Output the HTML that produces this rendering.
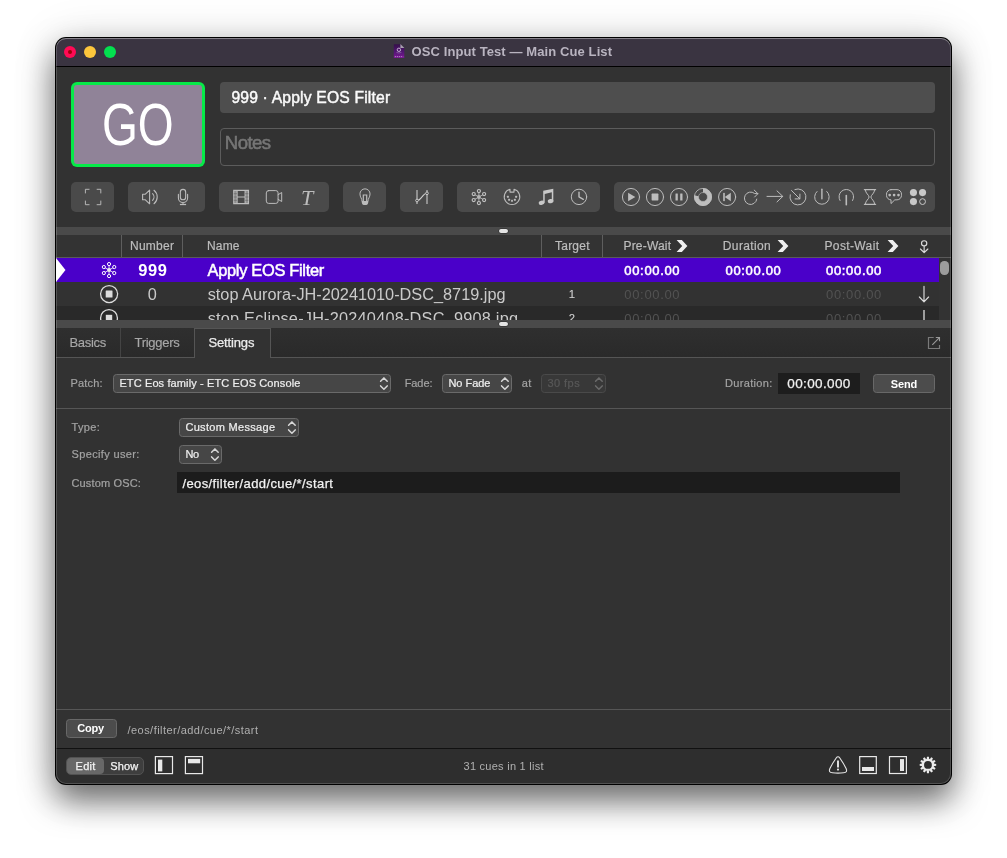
<!DOCTYPE html>
<html><head><meta charset="utf-8"><title>OSC Input Test — Main Cue List</title>
<style>
html,body{margin:0;padding:0;background:#fff;}
body{width:1007px;height:858px;position:relative;overflow:hidden;font-family:"Liberation Sans",sans-serif;}
#shadow{position:absolute;left:55px;top:37px;width:897px;height:748px;border-radius:11px;background:#000;
 box-shadow:0 16px 32px rgba(0,0,0,.55),0 2px 46px rgba(0,0,0,.13);}
#win{will-change:transform;position:absolute;left:0;top:0;width:1007px;height:858px;clip-path:inset(38px 56px 74px 56px round 10px);background:#323232;}
#hl{position:absolute;left:56px;top:38px;width:895px;height:746px;border-radius:10px;box-shadow:inset 0 0 0 1px rgba(255,255,255,.17), inset 0 1px 0 0 rgba(255,255,255,.26);pointer-events:none;}
svg{position:absolute;left:0;top:0;overflow:visible}
</style></head><body>
<div id="shadow"></div>
<div id="win">
<div style="position:absolute;left:56px;top:38px;width:895px;height:28px;background:#3a3441;border-radius:0px;"></div><div style="position:absolute;left:56px;top:66px;width:895px;height:1px;background:#000;border-radius:0px;"></div><div style="position:absolute;left:64px;top:46px;width:12px;height:12px;background:#ff0a55;border-radius:6px;"></div><div style="position:absolute;left:68px;top:50px;width:4px;height:4px;background:#9e0008;border-radius:2px;"></div><div style="position:absolute;left:84px;top:46px;width:12px;height:12px;background:#fdc63c;border-radius:6px;"></div><div style="position:absolute;left:104px;top:46px;width:12px;height:12px;background:#03e04f;border-radius:6px;"></div><span style='position:absolute;white-space:pre;font-family:"Liberation Sans",sans-serif;font-size:13px;font-weight:700;font-style:normal;line-height:13px;color:#b9b4c0;letter-spacing:0.098px;left:411.5px;top:45px;'>OSC Input Test — Main Cue List</span><div style="position:absolute;left:71px;top:82px;width:134px;height:85px;background:#06ea48;border-radius:6px;"></div><div style="position:absolute;left:74px;top:85px;width:128px;height:79px;background:#908398;border-radius:3px;"></div><span style='position:absolute;white-space:pre;font-family:"Liberation Sans",sans-serif;font-size:59.5px;font-weight:400;font-style:normal;line-height:59.5px;color:#fff;letter-spacing:0px;left:102.03px;top:94.8px;transform:scaleX(0.775);transform-origin:0 50%;'>GO</span><div style="position:absolute;left:220px;top:82px;width:715px;height:31px;background:#4e4e4e;border-radius:4px;"></div><span style='position:absolute;white-space:pre;font-family:"Liberation Sans",sans-serif;font-size:15.7px;font-weight:400;font-style:normal;line-height:15.7px;color:#fafafa;letter-spacing:0.171px;left:231.4px;top:89.8px;-webkit-text-stroke:0.45px #fafafa;'>999 · Apply EOS Filter</span><div style="position:absolute;left:220px;top:128px;width:715px;height:38px;background:transparent;border-radius:4px;box-sizing:border-box;border:1px solid #5c5c5c;"></div><span style='position:absolute;white-space:pre;font-family:"Liberation Sans",sans-serif;font-size:18.6px;font-weight:400;font-style:normal;line-height:18.6px;color:#767676;letter-spacing:-0.595px;left:224.8px;top:134.1px;-webkit-text-stroke:0.55px #767676;'>Notes</span><div style="position:absolute;left:71px;top:182px;width:43px;height:30px;background:#4a4a4a;border-radius:5px;"></div><div style="position:absolute;left:128px;top:182px;width:77px;height:30px;background:#4a4a4a;border-radius:5px;"></div><div style="position:absolute;left:219px;top:182px;width:110px;height:30px;background:#4a4a4a;border-radius:5px;"></div><div style="position:absolute;left:343px;top:182px;width:43px;height:30px;background:#4a4a4a;border-radius:5px;"></div><div style="position:absolute;left:400px;top:182px;width:43px;height:30px;background:#4a4a4a;border-radius:5px;"></div><div style="position:absolute;left:457px;top:182px;width:143px;height:30px;background:#4a4a4a;border-radius:5px;"></div><div style="position:absolute;left:614px;top:182px;width:321px;height:30px;background:#4a4a4a;border-radius:5px;"></div><div style="position:absolute;left:56px;top:227px;width:895px;height:8px;background:#4a4a4a;border-radius:0px;"></div><div style="position:absolute;left:499px;top:229px;width:9px;height:4px;background:#e4e4e4;border-radius:2px;box-shadow:0 0 0 .5px rgba(0,0,0,.45);"></div><div style="position:absolute;left:56px;top:235px;width:895px;height:23px;background:#333;border-radius:0px;"></div><div style="position:absolute;left:121px;top:235px;width:1px;height:22px;background:#5e5e5e;border-radius:0px;"></div><div style="position:absolute;left:182px;top:235px;width:1px;height:22px;background:#5e5e5e;border-radius:0px;"></div><div style="position:absolute;left:541px;top:235px;width:1px;height:22px;background:#5e5e5e;border-radius:0px;"></div><div style="position:absolute;left:602px;top:235px;width:1px;height:22px;background:#5e5e5e;border-radius:0px;"></div><div style="position:absolute;left:56px;top:257px;width:895px;height:1px;background:#5a5a5a;border-radius:0px;"></div><span style='position:absolute;white-space:pre;font-family:"Liberation Sans",sans-serif;font-size:12px;font-weight:400;font-style:normal;line-height:12px;color:#bdbdbd;letter-spacing:0.263px;left:130px;top:239.8px;-webkit-text-stroke:0.2px #bdbdbd;'>Number</span><span style='position:absolute;white-space:pre;font-family:"Liberation Sans",sans-serif;font-size:12px;font-weight:400;font-style:normal;line-height:12px;color:#bdbdbd;letter-spacing:0.161px;left:207px;top:239.8px;-webkit-text-stroke:0.2px #bdbdbd;'>Name</span><span style='position:absolute;white-space:pre;font-family:"Liberation Sans",sans-serif;font-size:12px;font-weight:400;font-style:normal;line-height:12px;color:#bdbdbd;letter-spacing:0.228px;left:555px;top:239.8px;-webkit-text-stroke:0.2px #bdbdbd;'>Target</span><span style='position:absolute;white-space:pre;font-family:"Liberation Sans",sans-serif;font-size:12px;font-weight:400;font-style:normal;line-height:12px;color:#bdbdbd;letter-spacing:0.181px;left:623.5px;top:239.8px;-webkit-text-stroke:0.2px #bdbdbd;'>Pre-Wait</span><span style='position:absolute;white-space:pre;font-family:"Liberation Sans",sans-serif;font-size:12px;font-weight:400;font-style:normal;line-height:12px;color:#bdbdbd;letter-spacing:0.377px;left:722.8px;top:239.8px;-webkit-text-stroke:0.2px #bdbdbd;'>Duration</span><span style='position:absolute;white-space:pre;font-family:"Liberation Sans",sans-serif;font-size:12px;font-weight:400;font-style:normal;line-height:12px;color:#bdbdbd;letter-spacing:0.367px;left:824.5px;top:239.8px;-webkit-text-stroke:0.2px #bdbdbd;'>Post-Wait</span><div style="position:absolute;left:56px;top:258px;width:883px;height:24px;background:#4a00c9;border-radius:0px;"></div><div style="position:absolute;left:56px;top:282px;width:883px;height:24px;background:#323232;border-radius:0px;"></div><div style="position:absolute;left:56px;top:306px;width:883px;height:14px;background:#292929;border-radius:0px;"></div><div style="position:absolute;left:939px;top:258px;width:12px;height:62px;background:#333;border-radius:0px;"></div><div style="position:absolute;left:940.4px;top:261px;width:8.3px;height:14px;background:#9c9c9c;border-radius:4.2px;"></div><svg width="1007" height="858"><polygon points="56,258 65.5,270 56,282" fill="#fff"/></svg><span style='position:absolute;white-space:pre;font-family:"Liberation Sans",sans-serif;font-size:16.5px;font-weight:700;font-style:normal;line-height:16.5px;color:#fff;letter-spacing:0.634px;left:138.2px;top:261.9px;'>999</span><span style='position:absolute;white-space:pre;font-family:"Liberation Sans",sans-serif;font-size:16.4px;font-weight:400;font-style:normal;line-height:16.4px;color:#fff;letter-spacing:-0.304px;left:207.6px;top:261.8px;-webkit-text-stroke:0.5px #fff;'>Apply EOS Filter</span><span style='position:absolute;white-space:pre;font-family:"Liberation Sans",sans-serif;font-size:13px;font-weight:400;font-style:normal;line-height:13px;color:#fff;letter-spacing:0.67px;left:624.3px;top:263.7px;-webkit-text-stroke:0.55px #fff;'>00:00.00</span><span style='position:absolute;white-space:pre;font-family:"Liberation Sans",sans-serif;font-size:13px;font-weight:400;font-style:normal;line-height:13px;color:#fff;letter-spacing:0.67px;left:725.5px;top:263.7px;-webkit-text-stroke:0.55px #fff;'>00:00.00</span><span style='position:absolute;white-space:pre;font-family:"Liberation Sans",sans-serif;font-size:13px;font-weight:400;font-style:normal;line-height:13px;color:#fff;letter-spacing:0.67px;left:826px;top:263.7px;-webkit-text-stroke:0.55px #fff;'>00:00.00</span><span style='position:absolute;white-space:pre;font-family:"Liberation Sans",sans-serif;font-size:16.3px;font-weight:400;font-style:normal;line-height:16.3px;color:#cacaca;letter-spacing:0px;left:147.87px;top:285.8px;'>0</span><span style='position:absolute;white-space:pre;font-family:"Liberation Sans",sans-serif;font-size:16.3px;font-weight:400;font-style:normal;line-height:16.3px;color:#cacaca;letter-spacing:0.001px;left:207.7px;top:285.7px;'>stop Aurora-JH-20241010-DSC_8719.jpg</span><span style='position:absolute;white-space:pre;font-family:"Liberation Sans",sans-serif;font-size:11.3px;font-weight:400;font-style:normal;line-height:11.3px;color:#d0d0d0;letter-spacing:0px;left:568.85px;top:288.7px;-webkit-text-stroke:0.1px #d0d0d0;'>1</span><span style='position:absolute;white-space:pre;font-family:"Liberation Sans",sans-serif;font-size:13px;font-weight:400;font-style:normal;line-height:13px;color:#525252;letter-spacing:0.67px;left:624.3px;top:287.7px;'>00:00.00</span><span style='position:absolute;white-space:pre;font-family:"Liberation Sans",sans-serif;font-size:13px;font-weight:400;font-style:normal;line-height:13px;color:#525252;letter-spacing:0.67px;left:826px;top:287.7px;'>00:00.00</span><div style="position:absolute;left:56px;top:306px;width:883px;height:14px;overflow:hidden"><div style="position:absolute;left:-56px;top:-306px;width:1007px;height:858px"><span style='position:absolute;white-space:pre;font-family:"Liberation Sans",sans-serif;font-size:16.3px;font-weight:400;font-style:normal;line-height:16.3px;color:#cacaca;letter-spacing:0.222px;left:207.7px;top:309.7px;'>stop Eclipse-JH-20240408-DSC_9908.jpg</span><span style='position:absolute;white-space:pre;font-family:"Liberation Sans",sans-serif;font-size:11.3px;font-weight:400;font-style:normal;line-height:11.3px;color:#d0d0d0;letter-spacing:0px;left:568.85px;top:312.7px;-webkit-text-stroke:0.1px #d0d0d0;'>2</span><span style='position:absolute;white-space:pre;font-family:"Liberation Sans",sans-serif;font-size:13px;font-weight:400;font-style:normal;line-height:13px;color:#525252;letter-spacing:0.67px;left:624.3px;top:311.7px;'>00:00.00</span><span style='position:absolute;white-space:pre;font-family:"Liberation Sans",sans-serif;font-size:13px;font-weight:400;font-style:normal;line-height:13px;color:#525252;letter-spacing:0.67px;left:826px;top:311.7px;'>00:00.00</span><svg width="1007" height="858"><g fill="none" stroke="#ddd" stroke-width="1.3"><circle cx="109" cy="318" r="8.4"/><path d="M924,310V326"/></g><rect x="105.8" y="314.8" width="6.4" height="6.4" fill="#ddd"/></svg></div></div><div style="position:absolute;left:56px;top:319.5px;width:895px;height:8.9px;background:#4a4a4a;border-radius:0px;"></div><div style="position:absolute;left:499px;top:322px;width:9px;height:4px;background:#e4e4e4;border-radius:2px;box-shadow:0 0 0 .5px rgba(0,0,0,.45);"></div><div style="position:absolute;left:56px;top:328px;width:895px;height:29px;background:#2c2c2c;border-radius:0px;background:linear-gradient(#2f2f2f,#2a2a2a);"></div><div style="position:absolute;left:56px;top:357px;width:895px;height:1px;background:#555;border-radius:0px;"></div><div style="position:absolute;left:120px;top:328px;width:1px;height:29px;background:#444;border-radius:0px;"></div><div style="position:absolute;left:194px;top:328px;width:76.5px;height:30px;background:#323232;border-radius:0px;box-sizing:border-box;border:1px solid #555;border-bottom:none;"></div><span style='position:absolute;white-space:pre;font-family:"Liberation Sans",sans-serif;font-size:13px;font-weight:400;font-style:normal;line-height:13px;color:#a8a8a8;letter-spacing:-0.299px;left:69.5px;top:336px;-webkit-text-stroke:0.15px #a8a8a8;'>Basics</span><span style='position:absolute;white-space:pre;font-family:"Liberation Sans",sans-serif;font-size:13px;font-weight:400;font-style:normal;line-height:13px;color:#a8a8a8;letter-spacing:-0.286px;left:134.5px;top:336px;-webkit-text-stroke:0.15px #a8a8a8;'>Triggers</span><span style='position:absolute;white-space:pre;font-family:"Liberation Sans",sans-serif;font-size:13px;font-weight:400;font-style:normal;line-height:13px;color:#ececec;letter-spacing:-0.141px;left:208.4px;top:336px;-webkit-text-stroke:0.25px #ececec;'>Settings</span><span style='position:absolute;white-space:pre;font-family:"Liberation Sans",sans-serif;font-size:11px;font-weight:400;font-style:normal;line-height:11px;color:#a3a3a3;letter-spacing:0.203px;left:70.4px;top:378px;-webkit-text-stroke:0.2px #a3a3a3;'>Patch:</span><div style="position:absolute;left:113px;top:374px;width:278px;height:19px;background:#464646;border-radius:3.5px;box-sizing:border-box;border:1px solid #6a6a6a;"></div><span style='position:absolute;white-space:pre;font-family:"Liberation Sans",sans-serif;font-size:11px;font-weight:400;font-style:normal;line-height:11px;color:#eee;letter-spacing:0.12px;left:119.4px;top:378.1px;-webkit-text-stroke:0.22px #eee;'>ETC Eos family - ETC EOS Console</span><svg width="1007" height="858"><path d="M380.59999999999997,381.3L383.9,377.9L387.2,381.3M380.59999999999997,385.9L383.9,389.3L387.2,385.9" fill="none" stroke="#d8d8d8" stroke-width="1.5" stroke-linecap="round" stroke-linejoin="round"/></svg><span style='position:absolute;white-space:pre;font-family:"Liberation Sans",sans-serif;font-size:11px;font-weight:400;font-style:normal;line-height:11px;color:#a3a3a3;letter-spacing:-0.085px;left:404.7px;top:378px;-webkit-text-stroke:0.2px #a3a3a3;'>Fade:</span><div style="position:absolute;left:442px;top:374px;width:70px;height:19px;background:#464646;border-radius:3.5px;box-sizing:border-box;border:1px solid #6a6a6a;"></div><span style='position:absolute;white-space:pre;font-family:"Liberation Sans",sans-serif;font-size:11px;font-weight:400;font-style:normal;line-height:11px;color:#eee;letter-spacing:-0.017px;left:448.4px;top:378.1px;-webkit-text-stroke:0.22px #eee;'>No Fade</span><svg width="1007" height="858"><path d="M501.59999999999997,381.3L504.9,377.9L508.2,381.3M501.59999999999997,385.9L504.9,389.3L508.2,385.9" fill="none" stroke="#d8d8d8" stroke-width="1.5" stroke-linecap="round" stroke-linejoin="round"/></svg><span style='position:absolute;white-space:pre;font-family:"Liberation Sans",sans-serif;font-size:11px;font-weight:400;font-style:normal;line-height:11px;color:#a3a3a3;letter-spacing:0.213px;left:521.8px;top:378px;-webkit-text-stroke:0.2px #a3a3a3;'>at</span><div style="position:absolute;left:541px;top:374px;width:65px;height:19px;background:#383838;border-radius:3.5px;box-sizing:border-box;border:1px solid #4a4a4a;"></div><span style='position:absolute;white-space:pre;font-family:"Liberation Sans",sans-serif;font-size:11px;font-weight:400;font-style:normal;line-height:11px;color:#585858;letter-spacing:0.466px;left:547.4px;top:378.1px;-webkit-text-stroke:0.22px #585858;'>30 fps</span><svg width="1007" height="858"><path d="M595.6,381.3L598.9,377.9L602.1999999999999,381.3M595.6,385.9L598.9,389.3L602.1999999999999,385.9" fill="none" stroke="#6a6a6a" stroke-width="1.5" stroke-linecap="round" stroke-linejoin="round"/></svg><span style='position:absolute;white-space:pre;font-family:"Liberation Sans",sans-serif;font-size:11px;font-weight:400;font-style:normal;line-height:11px;color:#a3a3a3;letter-spacing:0.332px;left:725px;top:378px;-webkit-text-stroke:0.2px #a3a3a3;'>Duration:</span><div style="position:absolute;left:778px;top:373px;width:82px;height:21px;background:#1d1d1d;border-radius:0px;"></div><span style='position:absolute;white-space:pre;font-family:"Liberation Sans",sans-serif;font-size:13.5px;font-weight:400;font-style:normal;line-height:13.5px;color:#f2f2f2;letter-spacing:0.367px;left:787.3px;top:377.4px;-webkit-text-stroke:0.25px #f2f2f2;'>00:00.000</span><div style="position:absolute;left:873px;top:374px;width:62px;height:19px;background:#4c4c4c;border-radius:3.5px;box-sizing:border-box;border:1px solid #686868;"></div><span style='position:absolute;white-space:pre;font-family:"Liberation Sans",sans-serif;font-size:11px;font-weight:700;font-style:normal;line-height:11px;color:#fff;letter-spacing:-0.169px;left:890.8px;top:378.6px;'>Send</span><div style="position:absolute;left:56px;top:408px;width:895px;height:1px;background:#565656;border-radius:0px;"></div><span style='position:absolute;white-space:pre;font-family:"Liberation Sans",sans-serif;font-size:11px;font-weight:400;font-style:normal;line-height:11px;color:#a3a3a3;letter-spacing:0.348px;left:71.5px;top:422.2px;-webkit-text-stroke:0.2px #a3a3a3;'>Type:</span><div style="position:absolute;left:179px;top:418px;width:120px;height:19px;background:#464646;border-radius:3.5px;box-sizing:border-box;border:1px solid #6a6a6a;"></div><span style='position:absolute;white-space:pre;font-family:"Liberation Sans",sans-serif;font-size:11px;font-weight:400;font-style:normal;line-height:11px;color:#eee;letter-spacing:0.316px;left:185.4px;top:422.1px;-webkit-text-stroke:0.22px #eee;'>Custom Message</span><svg width="1007" height="858"><path d="M288.59999999999997,425.3L291.9,421.9L295.2,425.3M288.59999999999997,429.9L291.9,433.3L295.2,429.9" fill="none" stroke="#d8d8d8" stroke-width="1.5" stroke-linecap="round" stroke-linejoin="round"/></svg><span style='position:absolute;white-space:pre;font-family:"Liberation Sans",sans-serif;font-size:11px;font-weight:400;font-style:normal;line-height:11px;color:#a3a3a3;letter-spacing:0.359px;left:71.5px;top:448.8px;-webkit-text-stroke:0.2px #a3a3a3;'>Specify user:</span><div style="position:absolute;left:179px;top:445px;width:43px;height:19px;background:#464646;border-radius:3.5px;box-sizing:border-box;border:1px solid #6a6a6a;"></div><span style='position:absolute;white-space:pre;font-family:"Liberation Sans",sans-serif;font-size:11px;font-weight:400;font-style:normal;line-height:11px;color:#eee;letter-spacing:-0.363px;left:185.4px;top:449.1px;-webkit-text-stroke:0.22px #eee;'>No</span><svg width="1007" height="858"><path d="M211.6,452.3L214.9,448.9L218.20000000000002,452.3M211.6,456.9L214.9,460.3L218.20000000000002,456.9" fill="none" stroke="#d8d8d8" stroke-width="1.5" stroke-linecap="round" stroke-linejoin="round"/></svg><span style='position:absolute;white-space:pre;font-family:"Liberation Sans",sans-serif;font-size:11px;font-weight:400;font-style:normal;line-height:11px;color:#a3a3a3;letter-spacing:0.154px;left:71.5px;top:478.2px;-webkit-text-stroke:0.2px #a3a3a3;'>Custom OSC:</span><div style="position:absolute;left:177px;top:472px;width:723px;height:21px;background:#1c1c1c;border-radius:0px;"></div><span style='position:absolute;white-space:pre;font-family:"Liberation Sans",sans-serif;font-size:13px;font-weight:400;font-style:normal;line-height:13px;color:#f2f2f2;letter-spacing:0.4px;left:182.4px;top:477.3px;-webkit-text-stroke:0.25px #f2f2f2;'>/eos/filter/add/cue/*/start</span><div style="position:absolute;left:56px;top:709px;width:895px;height:1px;background:#565656;border-radius:0px;"></div><div style="position:absolute;left:66px;top:719px;width:51px;height:19px;background:#4c4c4c;border-radius:3.5px;box-sizing:border-box;border:1px solid #686868;"></div><span style='position:absolute;white-space:pre;font-family:"Liberation Sans",sans-serif;font-size:11px;font-weight:700;font-style:normal;line-height:11px;color:#fff;letter-spacing:-0.233px;left:77.3px;top:723.3px;'>Copy</span><span style='position:absolute;white-space:pre;font-family:"Liberation Sans",sans-serif;font-size:11px;font-weight:400;font-style:normal;line-height:11px;color:#b0b0b0;letter-spacing:0.457px;left:127.5px;top:724.5px;'>/eos/filter/add/cue/*/start</span><div style="position:absolute;left:56px;top:748px;width:895px;height:1px;background:#111;border-radius:0px;"></div><div style="position:absolute;left:56px;top:749px;width:895px;height:35px;background:#2e2e2e;border-radius:0px;"></div><div style="position:absolute;left:66px;top:757px;width:78px;height:18px;background:#3e3e3e;border-radius:5px;box-sizing:border-box;border:1px solid #525252;"></div><div style="position:absolute;left:67px;top:758px;width:37px;height:16px;background:#686868;border-radius:4px;"></div><span style='position:absolute;white-space:pre;font-family:"Liberation Sans",sans-serif;font-size:11px;font-weight:400;font-style:normal;line-height:11px;color:#f4f4f4;letter-spacing:0.277px;left:75.6px;top:760.7px;-webkit-text-stroke:0.25px #f4f4f4;'>Edit</span><span style='position:absolute;white-space:pre;font-family:"Liberation Sans",sans-serif;font-size:11px;font-weight:400;font-style:normal;line-height:11px;color:#f4f4f4;letter-spacing:0.09px;left:110.3px;top:760.7px;-webkit-text-stroke:0.25px #f4f4f4;'>Show</span><span style='position:absolute;white-space:pre;font-family:"Liberation Sans",sans-serif;font-size:11px;font-weight:400;font-style:normal;line-height:11px;color:#b0b0b0;letter-spacing:0.261px;left:463.5px;top:761px;'>31 cues in 1 list</span><svg width="1007" height="858"><g transform="translate(93.1,197)" ><path d="M-7.7,-3.6V-7.7H-3.6M3.6,-7.7H7.7V-3.6M7.7,3.6V7.7H3.6M-3.6,7.7H-7.7V3.6" fill="none" stroke="#bcbcbc" stroke-width=".95"/></g><g transform="translate(150,197)" ><path d="M-7.4,-2.7H-4.9L-0.4,-6.8V6.8L-4.9,2.7H-7.4Z" fill="none" stroke="#bcbcbc" stroke-width="1.1" stroke-linecap="round" stroke-linejoin="round"/><path d="M2.6,-3.3A4.7,4.7 0 0 1 2.6,3.3M4,-6.7A8.6,8.6 0 0 1 4,6.7" fill="none" stroke="#bcbcbc" stroke-width="1.1" stroke-linecap="round" stroke-linejoin="round"/></g><g transform="translate(183,197)" ><rect x="-2.65" y="-7.6" width="5.3" height="10.4" rx="2.65" fill="none" stroke="#bcbcbc" stroke-width="1.1" stroke-linecap="round" stroke-linejoin="round"/><path d="M-4.6,-2.6V0.9A4.6,4.6 0 0 0 4.6,0.9V-2.6M0,5.5V7.5" fill="none" stroke="#bcbcbc" stroke-width="1.1" stroke-linecap="round" stroke-linejoin="round"/><path d="M-3.1,7.5H3.1" fill="none" stroke="#bcbcbc" stroke-width="1.25" stroke-linecap="butt" stroke-linejoin="round"/></g><g transform="translate(241.1,197)" ><rect x="-7.4" y="-6.7" width="3.4" height="13.4" fill="#bcbcbc" fill-opacity=".6"/><rect x="4" y="-6.7" width="3.4" height="13.4" fill="#bcbcbc" fill-opacity=".6"/><path d="M-7.4,-6.6H7.4V6.6H-7.4ZM-4,-6.6V6.6M4,-6.6V6.6M-4,0H4" fill="none" stroke="#bcbcbc" stroke-width="1.1" stroke-linecap="butt" stroke-linejoin="miter"/><path d="M-7.4,-3.3H-4M-7.4,0H-4M-7.4,3.3H-4M4,-3.3H7.4M4,0H7.4M4,3.3H7.4" fill="none" stroke="#4a4a4a" stroke-width=".6" stroke-opacity=".7"/></g><g transform="translate(274,197)" ><rect x="-7.7" y="-6.4" width="11.8" height="12.8" rx="2.3" fill="none" stroke="#bcbcbc" stroke-width="1" stroke-linecap="round" stroke-linejoin="round"/><path d="M4.1,-2.3L7.7,-4.5V4.5L4.1,2.3" fill="none" stroke="#bcbcbc" stroke-width="1" stroke-linecap="round" stroke-linejoin="round"/></g><g transform="translate(365,197)" ><path d="M-2.9,4.2C-2.9,1.4 -5.05,0.4 -5.05,-3.1A5.05,5.05 0 0 1 5.05,-3.1C5.05,0.4 2.9,1.4 2.9,4.2" fill="none" stroke="#bcbcbc" stroke-width="1" stroke-linecap="round" stroke-linejoin="round"/><path d="M-1.7,4V-2H1.7V4" fill="none" stroke="#bcbcbc" stroke-width="1.2"/><path d="M-3.2,4H3.2V5.2A3.2,2.9 0 0 1 -3.2,5.2Z" fill="#bcbcbc" stroke="none"/></g><g transform="translate(422,197)" ><path d="M-5,-6.9V6.9M5,-6.9V6.9" fill="none" stroke="#a2a2a2" stroke-width="1.6"/><path d="M-5,3.5C-2,3.5 -1.6,1.6 0,-0.1C1.6,-1.8 2,-3.7 5,-3.7" fill="none" stroke="#cfcfcf" stroke-width="1.1"/><circle cx="-5" cy="3.5" r="1.35" fill="#4a4a4a" stroke="#cfcfcf" stroke-width=".9"/><circle cx="5" cy="-3.7" r="1.35" fill="#4a4a4a" stroke="#cfcfcf" stroke-width=".9"/></g><g transform="translate(478.9,197)" ><path d="M0,0L0.00,-6.00" stroke="#c2c2c2" stroke-width="0.8" fill="none"/><path d="M0,0L-5.20,-3.00" stroke="#c2c2c2" stroke-width="0.8" fill="none"/><path d="M0,0L-5.20,3.00" stroke="#c2c2c2" stroke-width="0.8" fill="none"/><path d="M0,0L-0.00,6.00" stroke="#c2c2c2" stroke-width="0.8" fill="none"/><path d="M0,0L5.20,3.00" stroke="#c2c2c2" stroke-width="0.8" fill="none"/><path d="M0,0L5.20,-3.00" stroke="#c2c2c2" stroke-width="0.8" fill="none"/><circle cx="0.00" cy="-6.00" r="1.55" fill="#4a4a4a" stroke="#c2c2c2" stroke-width="1.15"/><circle cx="-5.20" cy="-3.00" r="1.55" fill="#4a4a4a" stroke="#c2c2c2" stroke-width="1.15"/><circle cx="-5.20" cy="3.00" r="1.55" fill="#4a4a4a" stroke="#c2c2c2" stroke-width="1.15"/><circle cx="-0.00" cy="6.00" r="1.55" fill="#4a4a4a" stroke="#c2c2c2" stroke-width="1.15"/><circle cx="5.20" cy="3.00" r="1.55" fill="#4a4a4a" stroke="#c2c2c2" stroke-width="1.15"/><circle cx="5.20" cy="-3.00" r="1.55" fill="#4a4a4a" stroke="#c2c2c2" stroke-width="1.15"/><circle cx="0" cy="0" r="1.9" fill="#b4b4b4"/></g><g transform="translate(512,196.8)" ><path d="M-2,-7.5A7.75,7.75 0 1 0 2,-7.5V-4.7H-2Z" fill="none" stroke="#bcbcbc" stroke-width="1.1" stroke-linecap="round" stroke-linejoin="round"/><rect x="-5.05" y="-1.05" width="1.9" height="1.9" rx=".5" fill="#bcbcbc" stroke="none"/><rect x="-3.8499999999999996" y="2.05" width="1.9" height="1.9" rx=".5" fill="#bcbcbc" stroke="none"/><rect x="-0.95" y="3.05" width="1.9" height="1.9" rx=".5" fill="#bcbcbc" stroke="none"/><rect x="1.95" y="2.05" width="1.9" height="1.9" rx=".5" fill="#bcbcbc" stroke="none"/><rect x="3.1499999999999995" y="-1.05" width="1.9" height="1.9" rx=".5" fill="#bcbcbc" stroke="none"/></g><g transform="translate(546,197)" ><path d="M-2.8,-6.2L7.3,-8.3V4.2H5.8V-4.7L-1.3,-3.1V5.8H-2.8Z" fill="#c8c8c8"/><ellipse cx="-4.45" cy="5.8" rx="2.85" ry="2.1" fill="#c8c8c8" transform="rotate(-14 -4.45 5.8)"/><ellipse cx="4.6" cy="4.1" rx="2.85" ry="2.1" fill="#c8c8c8" transform="rotate(-14 4.6 4.1)"/></g><g transform="translate(579,196.9)" ><circle r="7.7" fill="none" stroke="#bcbcbc" stroke-width="1" stroke-linecap="round" stroke-linejoin="round"/><path d="M0,-4.8V0L4.3,2.4" fill="none" stroke="#bcbcbc" stroke-width="1.4" stroke-linecap="round" stroke-linejoin="round"/></g><g transform="translate(631,197)" ><circle r="8.55" fill="none" stroke="#bcbcbc" stroke-width="1" stroke-linecap="round" stroke-linejoin="round"/><path d="M-2.9,-4.2L4.3,0L-2.9,4.2Z" fill="#bcbcbc" stroke="none"/></g><g transform="translate(655,197)" ><circle r="8.55" fill="none" stroke="#bcbcbc" stroke-width="1" stroke-linecap="round" stroke-linejoin="round"/><rect x="-3.4" y="-3.4" width="6.8" height="6.8" rx=".6" fill="#bcbcbc" stroke="none"/></g><g transform="translate(679,197)" ><circle r="8.55" fill="none" stroke="#bcbcbc" stroke-width="1" stroke-linecap="round" stroke-linejoin="round"/><rect x="-3.5" y="-3.6" width="2.3" height="7.2" rx=".4" fill="#bcbcbc" stroke="none"/><rect x="1.2" y="-3.6" width="2.3" height="7.2" rx=".4" fill="#bcbcbc" stroke="none"/></g><g transform="translate(703,197)" ><circle r="6.7" fill="none" stroke="#bebebe" stroke-width="4.4" stroke-dasharray="32.63 9.47" transform="rotate(-90)"/><circle r="8.6" fill="none" stroke="#bebebe" stroke-width=".8"/><circle r="4.5" fill="none" stroke="#bebebe" stroke-width=".6"/></g><g transform="translate(727.1,197)" ><circle r="8.55" fill="none" stroke="#bcbcbc" stroke-width="1" stroke-linecap="round" stroke-linejoin="round"/><rect x="-3.9" y="-4.1" width="1.6" height="8.2" fill="#bcbcbc" stroke="none"/><path d="M3.7,-4.2L-2.3,0L3.7,4.2Z" fill="#bcbcbc" stroke="none"/></g><g transform="translate(750,197.6)" id="redo"><path d="M7.9,-3.9L4.6,-4.1A6.2,6.2 0 1 0 6.8,1.5" fill="none" stroke="#bcbcbc" stroke-width="1" stroke-linecap="round" stroke-linejoin="round"/><path d="M4.2,-7.5L7.9,-3.9L4.6,-0.6" fill="none" stroke="#bcbcbc" stroke-width="1" stroke-linecap="round" stroke-linejoin="round"/></g><g transform="translate(775,196.4)" ><path d="M-8,0H7.7M2,-5.5L7.8,0L2,5.5" fill="none" stroke="#bcbcbc" stroke-width="1" stroke-linecap="round" stroke-linejoin="round"/></g><g transform="translate(797.9,196.9)" ><path d="M-3,-7.4A8,8 0 1 1 -7.7,-2.1" fill="none" stroke="#bcbcbc" stroke-width="1" stroke-linecap="round" stroke-linejoin="round"/><path d="M-6.4,-6.4L1.9,1.9M2,-2.8V2H-2.8" fill="none" stroke="#bcbcbc" stroke-width="1" stroke-linecap="round" stroke-linejoin="round"/></g><g transform="translate(821.9,196.9)" ><path d="M4.9,-5.4A7.3,7.3 0 1 1 -4.9,-5.4" fill="none" stroke="#bcbcbc" stroke-width="1" stroke-linecap="round" stroke-linejoin="round"/><path d="M0,-7.6V1.9" fill="none" stroke="#bcbcbc" stroke-width="1.4" stroke-linecap="round" stroke-linejoin="round"/></g><g transform="translate(846.3,196.7)" ><path d="M-6.3,3.8A7.3,7.3 0 1 1 6.3,3.8" fill="none" stroke="#bcbcbc" stroke-width="1" stroke-linecap="round" stroke-linejoin="round"/><path d="M0,-1.2V8" fill="none" stroke="#bcbcbc" stroke-width="1.6" stroke-linecap="round" stroke-linejoin="round"/></g><g transform="translate(870,197)" ><path d="M-5.6,-7.3H5.6M-5.6,7.3H5.6" fill="none" stroke="#bcbcbc" stroke-width="1.25" stroke-linecap="round" stroke-linejoin="round"/><path d="M-4.7,-7.3C-4.7,-3.6 -0.9,-2 -0.9,0C-0.9,2 -4.7,3.6 -4.7,7.3M4.7,-7.3C4.7,-3.6 0.9,-2 0.9,0C0.9,2 4.7,3.6 4.7,7.3" fill="none" stroke="#bcbcbc" stroke-width="1" stroke-linecap="round" stroke-linejoin="round"/></g><g transform="translate(894,194.75)" ><path d="M-3,-5.1H3A4.5,4.5 0 0 1 7.5,-0.6V0.6A4.5,4.5 0 0 1 3,5.1H0.8L-3,8.8V5.1A4.5,4.5 0 0 1 -7.5,0.6V-0.6A4.5,4.5 0 0 1 -3,-5.1Z" fill="none" stroke="#bcbcbc" stroke-width="1" stroke-linecap="round" stroke-linejoin="round"/><circle cx="-4.3" cy="0.35" r="1.35" fill="#bcbcbc" stroke="none"/><circle cx="0.1" cy="0.35" r="1.35" fill="#bcbcbc" stroke="none"/><circle cx="4.5" cy="0.35" r="1.35" fill="#bcbcbc" stroke="none"/></g><g transform="translate(918,197.1)" ><circle cx="-4.55" cy="-4.5" r="3.55" fill="#c8c8c8"/><circle cx="4.55" cy="-4.5" r="3.55" fill="#c8c8c8"/><circle cx="-4.55" cy="4.5" r="3.55" fill="#c8c8c8"/><circle cx="4.55" cy="4.5" r="2.9" fill="none" stroke="#c8c8c8" stroke-width="1"/></g><path d="M676.6,240.1H681.8000000000001L687.4,246.1L681.8000000000001,252.1H676.6L682.2,246.1Z" fill="#efefef"/><path d="M777.6,240.1H782.8000000000001L788.4,246.1L782.8000000000001,252.1H777.6L783.2,246.1Z" fill="#efefef"/><path d="M887.6,240.1H892.8000000000001L898.4,246.1L892.8000000000001,252.1H887.6L893.2,246.1Z" fill="#efefef"/><g transform="translate(924.15,246.7)" ><circle cx="0" cy="-3.35" r="2.65" fill="none" stroke="#dcdcdc" stroke-width="1.15" stroke-linecap="round" stroke-linejoin="round"/><path d="M0,-0.9V5.6M-3.7,2.3L0,5.9L3.7,2.3" fill="none" stroke="#dcdcdc" stroke-width="1.15" stroke-linecap="round" stroke-linejoin="round"/></g><g transform="translate(109.05,270.05)" ><path d="M0,0L0.00,-6.00" stroke="#fff" stroke-width="0.8" fill="none"/><path d="M0,0L-5.20,-3.00" stroke="#fff" stroke-width="0.8" fill="none"/><path d="M0,0L-5.20,3.00" stroke="#fff" stroke-width="0.8" fill="none"/><path d="M0,0L-0.00,6.00" stroke="#fff" stroke-width="0.8" fill="none"/><path d="M0,0L5.20,3.00" stroke="#fff" stroke-width="0.8" fill="none"/><path d="M0,0L5.20,-3.00" stroke="#fff" stroke-width="0.8" fill="none"/><circle cx="0.00" cy="-6.00" r="1.6" fill="#4a00c9" stroke="#fff" stroke-width="1.0"/><circle cx="-5.20" cy="-3.00" r="1.6" fill="#4a00c9" stroke="#fff" stroke-width="1.0"/><circle cx="-5.20" cy="3.00" r="1.6" fill="#4a00c9" stroke="#fff" stroke-width="1.0"/><circle cx="-0.00" cy="6.00" r="1.6" fill="#4a00c9" stroke="#fff" stroke-width="1.0"/><circle cx="5.20" cy="3.00" r="1.6" fill="#4a00c9" stroke="#fff" stroke-width="1.0"/><circle cx="5.20" cy="-3.00" r="1.6" fill="#4a00c9" stroke="#fff" stroke-width="1.0"/><circle cx="0" cy="0" r="2.0" fill="#e8e8e8"/></g><g transform="translate(109.1,294)" ><circle r="8.5" fill="none" stroke="#dcdcdc" stroke-width="1.25"/><rect x="-3.4" y="-3.4" width="6.8" height="6.8" rx=".5" fill="#dcdcdc"/></g><g transform="translate(924,294)" ><path d="M0,-7.8V7.6M-4.6,3L0,7.8L4.6,3" fill="none" stroke="#dcdcdc" stroke-width="1.15" stroke-linecap="round" stroke-linejoin="round"/></g><g transform="translate(934,343)" ><path d="M-0.3,-5.5H-5.5V5.5H5.5V2" fill="none" stroke="#7a7a7a" stroke-width="1.2" stroke-linecap="butt" stroke-linejoin="miter"/><path d="M-1.7,1.8L5.4,-5.4M1.8,-5.5H5.5V-1.8" fill="none" stroke="#9a9a9a" stroke-width="1.1" stroke-linecap="butt"/></g><rect x="155.4" y="756.6" width="17.1" height="17" fill="none" stroke="#e8e8e8" stroke-width="1.2"/><rect x="158" y="759.6" width="4.3" height="11.8" fill="#e8e8e8"/><rect x="185.4" y="756.6" width="17.1" height="17" fill="none" stroke="#e8e8e8" stroke-width="1.2"/><rect x="188" y="758.9" width="12.2" height="4.4" fill="#e8e8e8"/><rect x="859.7" y="756.6" width="16.6" height="16.9" fill="none" stroke="#e8e8e8" stroke-width="1.2"/><rect x="862" y="767" width="12" height="4" fill="#e8e8e8"/><rect x="889.5" y="756.6" width="16.9" height="16.9" fill="none" stroke="#e8e8e8" stroke-width="1.2"/><rect x="900" y="759.1" width="4" height="11.9" fill="#e8e8e8"/><g transform="translate(838,765)" ><path d="M-1.8,-7.0Q0,-9.5 1.8,-7.0Q5.6,-1.6 8.1,3.5Q10,7.4 5.6,7.75Q0,8.35 -5.6,7.75Q-10,7.4 -8.1,3.5Q-5.6,-1.6 -1.8,-7.0Z" fill="none" stroke="#e4e4e4" stroke-width="1.15" stroke-linejoin="round"/><path d="M0,-4.4V2.4" stroke="#e8e8e8" stroke-width="1.9" stroke-linecap="butt"/><circle cx="0" cy="4.6" r="1.05" fill="#e8e8e8"/></g><g transform="translate(927.95,764.9)" ><path d="M-1.3,-5.6L-0.95,-8.25H0.95L1.3,-5.6Z" fill="#ececec" transform="rotate(0)"/><path d="M-1.3,-5.6L-0.95,-8.25H0.95L1.3,-5.6Z" fill="#ececec" transform="rotate(30)"/><path d="M-1.3,-5.6L-0.95,-8.25H0.95L1.3,-5.6Z" fill="#ececec" transform="rotate(60)"/><path d="M-1.3,-5.6L-0.95,-8.25H0.95L1.3,-5.6Z" fill="#ececec" transform="rotate(90)"/><path d="M-1.3,-5.6L-0.95,-8.25H0.95L1.3,-5.6Z" fill="#ececec" transform="rotate(120)"/><path d="M-1.3,-5.6L-0.95,-8.25H0.95L1.3,-5.6Z" fill="#ececec" transform="rotate(150)"/><path d="M-1.3,-5.6L-0.95,-8.25H0.95L1.3,-5.6Z" fill="#ececec" transform="rotate(180)"/><path d="M-1.3,-5.6L-0.95,-8.25H0.95L1.3,-5.6Z" fill="#ececec" transform="rotate(210)"/><path d="M-1.3,-5.6L-0.95,-8.25H0.95L1.3,-5.6Z" fill="#ececec" transform="rotate(240)"/><path d="M-1.3,-5.6L-0.95,-8.25H0.95L1.3,-5.6Z" fill="#ececec" transform="rotate(270)"/><path d="M-1.3,-5.6L-0.95,-8.25H0.95L1.3,-5.6Z" fill="#ececec" transform="rotate(300)"/><path d="M-1.3,-5.6L-0.95,-8.25H0.95L1.3,-5.6Z" fill="#ececec" transform="rotate(330)"/><circle r="5.05" fill="none" stroke="#ececec" stroke-width="2.3"/></g><defs><linearGradient id="dg" x1="0" y1="0" x2="0" y2="1"><stop offset="0" stop-color="#35104a"/><stop offset=".55" stop-color="#521574"/><stop offset="1" stop-color="#7c1896"/></linearGradient></defs><path d="M393.8,44.2H400.6L404.3,47.9V58H393.8Z" fill="url(#dg)"/><path d="M400.4,44L404.4,48H400.4Z" fill="#a9a3b0"/><circle cx="398.9" cy="49.8" r="1.7" fill="none" stroke="#cdbfd8" stroke-width=".9"/><path d="M396.4,52.4Q398.9,53.6 401.4,52.4" fill="none" stroke="#9d7fb4" stroke-width=".6"/><path d="M394.8,56.6H403.2" stroke="#b98ccc" stroke-width=".9" stroke-dasharray="1.2 .8"/></svg><span style='position:absolute;white-space:pre;font-family:"Liberation Serif",sans-serif;font-size:20.5px;font-weight:400;font-style:italic;line-height:20.5px;color:#bcbcbc;letter-spacing:0px;left:301.14px;top:187.6px;transform:scaleX(1.08);transform-origin:0 50%;'>T</span></div><div id="hl"></div></body></html>
